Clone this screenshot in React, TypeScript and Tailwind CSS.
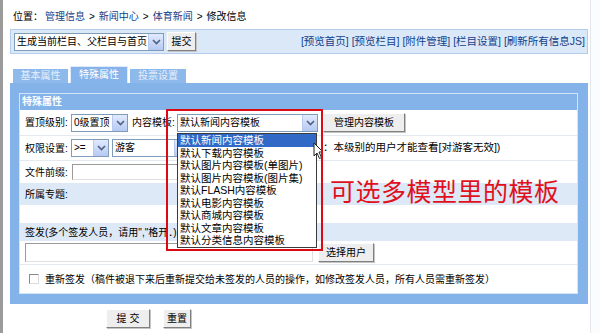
import React from 'react';

// 修改信息 - 特殊属性 tab, with the content-template dropdown opened

function Chevron() {
  return (
    <div className="flex h-full w-[15px] items-center justify-center border-l border-[#b7c9ee] bg-gradient-to-b from-[#e2ebfd] to-[#b5c9f3]">
      <svg width="9" height="6" viewBox="0 0 9 6">
        <polyline points="1,1 4.5,4.5 8,1" fill="none" stroke="#4d6185" strokeWidth="1.6" />
      </svg>
    </div>
  );
}

function Select({ text, className }: { text: string; className: string }) {
  return (
    <div className={`flex h-[18px] items-center border border-[#7f9db9] bg-white ${className}`}>
      <span className="flex-1 overflow-hidden whitespace-nowrap pl-[2px] leading-[16px]">{text}</span>
      <Chevron />
    </div>
  );
}

function Btn({ children, className }: { children: React.ReactNode; className: string }) {
  return (
    <div
      className={`flex h-[19px] items-center justify-center border border-t-white border-l-white border-r-[#808080] border-b-[#808080] bg-[#eeeeee] leading-[17px] shadow-[1px_1px_0_#c4c4c4] ${className}`}
    >
      {children}
    </div>
  );
}

const templates = [
  '默认新闻内容模板',
  '默认下载内容模板',
  '默认图片内容模板(单图片)',
  '默认图片内容模板(图片集)',
  '默认FLASH内容模板',
  '默认电影内容模板',
  '默认商城内容模板',
  '默认文章内容模板',
  '默认分类信息内容模板',
];

export default function App() {
  return (
    <div className="relative flex h-[333px] w-[600px] overflow-hidden bg-white text-[10px] text-black font-['Liberation_Sans','Noto_Sans_CJK_SC',sans-serif]">
      {/* left frame edge */}
      <div className="w-[3px] bg-[#9b9b9b]" />

      <div className="w-[585px] pl-[7px]">
        {/* breadcrumb */}
        <div className="mt-[10px] flex h-[14px] items-center whitespace-nowrap pl-[3px] leading-[14px]">
          <span>位置：</span>
          <span className="ml-[2px] text-[#13408a]">管理信息</span>
          <span className="mx-[4px]">&gt;</span>
          <span className="text-[#13408a]">新闻中心</span>
          <span className="mx-[4px]">&gt;</span>
          <span className="text-[#13408a]">体育新闻</span>
          <span className="mx-[4px]">&gt;</span>
          <span>修改信息</span>
        </div>

        {/* toolbar */}
        <div className="mt-[5px] flex h-[25px] w-[578px] items-center border border-[#b3cdec] bg-[#dae8f8] pl-[3px] pr-[2px]">
          <Select text="生成当前栏目、父栏目与首页" className="w-[150px]" />
          <Btn className="ml-[3px] w-[29px]">提交</Btn>
          <div className="ml-auto whitespace-nowrap text-[10.5px] text-[#13408a]">
            [预览首页] [预览栏目] [附件管理] [栏目设置] [刷新所有信息JS]
          </div>
        </div>

        {/* tabs */}
        <div className="mt-[12px] flex h-[17px] items-end gap-[2px] pl-[3px]">
          <div className="flex h-[14px] w-[55px] items-center justify-center bg-[#8dbaeb] leading-[14px] text-[#e6effb]">基本属性</div>
          <div className="flex h-[17px] w-[58px] items-center justify-center border-l border-r border-t border-[#dfeafa] bg-[#86b4ea] leading-[14px] text-white">特殊属性</div>
          <div className="flex h-[14px] w-[56px] items-center justify-center bg-[#8dbaeb] leading-[14px] text-[#e6effb]">投票设置</div>
        </div>

        {/* panel */}
        <div className="h-[221px] w-[578px] bg-[#84b3ea] pb-[10px] pl-[9px] pr-[10px] pt-[10px]">
          <div className="h-full border border-[#d4e4f8] bg-white">
            <div className="flex h-[16px] items-center bg-[#84b3ea] pl-[2px] font-bold leading-[16px] text-white">特殊属性</div>

            <div className="flex h-[26px] items-center border-b border-[#e4e9ef] pl-[5px]">
              <span className="w-[46px] whitespace-nowrap">置顶级别:</span>
              <Select text="0级置顶" className="w-[57px]" />
              <span className="ml-[4px] w-[45px] whitespace-nowrap">内容模板:</span>
              <Select text="默认新闻内容模板" className="w-[141px]" />
              <Btn className="ml-[5px] w-[82px]">管理内容模板</Btn>
            </div>

            <div className="flex h-[25px] items-center border-b border-[#e4e9ef] pl-[5px]">
              <span className="w-[46px] whitespace-nowrap">权限设置:</span>
              <Select text=">=" className="w-[38px]" />
              <Select text="游客" className="ml-[3px] w-[78px]" />
              <span className="ml-[133px] whitespace-nowrap text-[10.5px]">：本级别的用户才能查看[对游客无效])</span>
            </div>

            <div className="flex h-[22px] items-center pl-[5px]">
              <span className="w-[47px] whitespace-nowrap">文件前缀:</span>
              <div className="h-[16px] w-[240px] border border-[#9a9a9a] border-b-[#e0e0e0] border-r-[#e0e0e0] bg-white" />
            </div>

            <div className="flex h-[22px] items-center bg-[#dde9f6] pl-[5px]">所属专题:</div>
            <div className="h-[18px]" />
            <div className="flex h-[18px] items-center whitespace-nowrap bg-[#dde9f6] pl-[5px]">签发(多个签发人员，请用","格开．)</div>

            <div className="flex h-[24px] items-center border-b border-[#e4e9ef] pl-[5px]">
              <div className="h-[19px] w-[288px] border border-[#9a9a9a] border-b-[#e0e0e0] border-r-[#e0e0e0] bg-white" />
              <Btn className="ml-[5px] w-[56px]">选择用户</Btn>
            </div>

            <div className="flex h-[28px] items-center whitespace-nowrap pl-[9px]">
              <div className="h-[10px] w-[10px] border border-[#8a8a8a] border-b-[#dcdcdc] border-r-[#dcdcdc] bg-white" />
              <span className="ml-[6px]">重新签发（稿件被退下来后重新提交给未签发的人员的操作，如修改签发人员，所有人员需重新签发）</span>
            </div>
          </div>
        </div>

        {/* submit */}
        <div className="mt-[5px] flex gap-[13px] pl-[96px]">
          <Btn className="w-[44px]">提 交</Btn>
          <Btn className="w-[28px]">重置</Btn>
        </div>
      </div>

      {/* right frame edge */}
      <div className="ml-[2px] w-[10px] border-l border-[#e4e7ec] bg-[#fbfcfd]" />

      {/* opened dropdown of 内容模板 */}
      <div className="absolute left-[177px] top-[133px] w-[140px] border border-[#3c3c3c] bg-white text-[10.5px]">
        {templates.map((t, i) => (
          <div
            key={t}
            className={`h-[12.5px] whitespace-nowrap pl-[2px] leading-[12.5px] ${i === 0 ? 'bg-[#3169c6] text-white' : ''}`}
          >
            {t}
          </div>
        ))}
      </div>

      {/* mouse pointer */}
      <svg className="absolute left-[313px] top-[142px]" width="11" height="18" viewBox="0 0 11 18">
        <path d="M1 1 L1 14 L4 11 L6.5 16.5 L8.5 15.5 L6 10 L10 10 Z" fill="white" stroke="#222" strokeWidth="1" />
      </svg>

      {/* annotation */}
      <div className="absolute left-[166px] top-[109px] h-[142px] w-[157px] border-2 border-[#dc0a14]" />
      <div className="absolute left-[330px] top-[177px] whitespace-nowrap text-[25px] leading-[30px] tracking-[0.5px] text-[#e0101c]">
        可选多模型里的模板
      </div>
    </div>
  );
}
